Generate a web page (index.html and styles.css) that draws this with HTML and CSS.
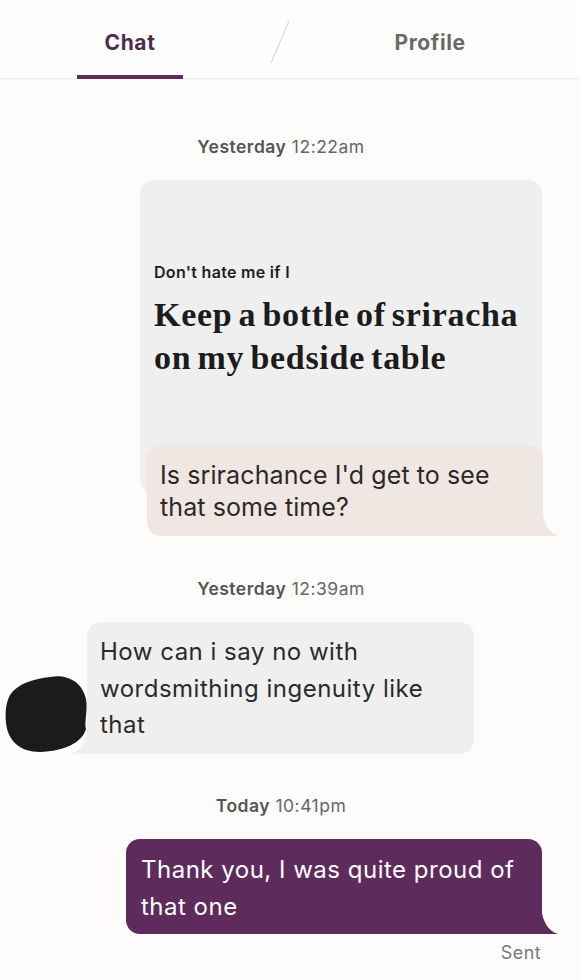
FILE: index.html
```html
<!DOCTYPE html>
<html>
<head>
<meta charset="utf-8">
<link rel="stylesheet" href="styles.css">
</head>
<body>
<header class="tabs">
  <div class="tab active">Chat</div>
  <div class="divider"><svg width="22" height="44" viewBox="0 0 22 44"><line x1="20" y1="1" x2="2" y2="43" stroke="#d9d9d9" stroke-width="1.2"/></svg></div>
  <div class="tab">Profile</div>
</header>
<main class="chat">
  <div class="stamp stamp-1"><b>Yesterday</b> 12:22am</div>
  <div class="prompt-group">
    <div class="prompt-card">
      <div class="prompt-q">Don't hate me if I</div>
      <div class="prompt-a">Keep a bottle of sriracha on my bedside table</div>
    </div>
    <div class="bubble reply">Is srirachance I'd get to see that some time?<svg class="tail tail-r" width="17" height="26" viewBox="0 0 17 26"><path d="M0 0 Q3 22 17 26 L0 26 Z" fill="#f1e7e2"/></svg></div>
  </div>
  <div class="stamp stamp-2"><b>Yesterday</b> 12:39am</div>
  <div class="incoming-row">
    <svg class="avatar" width="84" height="80" viewBox="0 0 84 80"><path d="M6 22 C14 10 30 6 46 4 C62 1 78 8 82 26 C84 38 80 50 82 56 C78 70 60 78 36 79 C16 79 4 68 2 50 C1 38 2 30 6 22 Z" fill="#1b1b1b"/></svg>
    <div class="bubble incoming">How can i say no with wordsmithing ingenuity like that<svg class="tail tail-l" width="18" height="26" viewBox="0 0 18 26"><path d="M18 0 Q15 22 0 26 L18 26 Z" fill="#efefef"/></svg></div>
  </div>
  <div class="stamp stamp-3"><b>Today</b> 10:41pm</div>
  <div class="bubble outgoing">Thank you, I was quite proud of that one<svg class="tail tail-r" width="17" height="26" viewBox="0 0 17 26"><path d="M0 0 Q3 22 17 26 L0 26 Z" fill="#5e2b5c"/></svg></div>
  <div class="sent">Sent</div>
</main>
</body>
</html>
```

FILE: styles.css
```css
* { box-sizing: border-box; }
html, body { margin: 0; padding: 0; }
body {
  background: #fdfcfb;
  font-family: Inter, "Noto Sans", sans-serif;
  color: #222;
  width: 580px;
  height: 980px;
  overflow: hidden;
}
.tabs {
  display: grid;
  grid-template-columns: 260px 40px 260px;
  height: 79px;
  border-bottom: 1px solid #ececec;
  box-shadow: 0 1px 2px rgba(0,0,0,0.04);
  background: #fefefe;
}
.tab {
  display: flex;
  align-items: center;
  justify-content: center;
  font-size: 21px;
  letter-spacing: 0.6px;
  font-weight: 700;
  color: #6a6a6a;
  position: relative;
  padding-top: 6px;
}
.tab.active { color: #4f2a4f; }
.tab.active::after {
  content: "";
  position: absolute;
  left: 77px;
  right: 77px;
  bottom: -1px;
  height: 4px;
  background: #5a2d5a;
}
.divider {
  display: flex;
  justify-content: center;
  padding-top: 20px;
}
.chat {
  display: flex;
  flex-direction: column;
}
.stamp {
  align-self: center;
  margin-right: 18px;
  font-size: 17.5px;
  line-height: 20px;
  color: #666;
  letter-spacing: 0.5px;
}
.stamp b { font-weight: 600; color: #555; }
.stamp-1 { margin-top: 58px; }
.stamp-2 { margin-top: 43px; }
.stamp-3 { margin-top: 42px; }
.prompt-group {
  margin-top: 23px;
  margin-left: 140px;
  width: 402px;
  display: flex;
  flex-direction: column;
}
.prompt-card {
  background: #efefef;
  border-radius: 14px;
  padding: 82px 14px 115px 14px;
}
.prompt-q {
  font-size: 16px;
  line-height: 20px;
  letter-spacing: 0.3px;
  font-weight: 600;
  color: #1e1e1e;
}
.prompt-a {
  margin-top: 11px;
  font-family: "Liberation Serif", "Times New Roman", serif;
  font-weight: 700;
  font-size: 34px;
  line-height: 43px;
  letter-spacing: 0.7px;
  word-spacing: -3px;
  color: #1c1c1c;
}
.bubble {
  position: relative;
  color: #2a2a2a;
}
.reply {
  margin-top: -49px;
  margin-left: 7px;
  width: 396px;
  background: #f1e7e2;
  border-radius: 14px 14px 0 14px;
  padding: 14px 13px 13px 13px;
  font-size: 25px;
  letter-spacing: 0.1px;
  line-height: 32px;
}
.tail { position: absolute; bottom: 0; }
.tail-r { right: -16px; }
.tail-l { left: -17px; }
.incoming-row {
  display: flex;
  align-items: flex-end;
  margin-top: 23px;
  padding-left: 4px;
}
.avatar {
  position: relative;
  z-index: 1;
  margin-bottom: 1px;
  margin-right: -1px;
}
.incoming {
  width: 387px;
  background: #efefef;
  border-radius: 14px 14px 14px 0;
  padding: 12px 13px 10px 13px;
  line-height: 36.5px;
  font-size: 24px;
  letter-spacing: 0.5px;
}
.outgoing {
  margin-top: 23px;
  margin-left: 126px;
  width: 416px;
  background: #5e2b5c;
  color: #fff;
  border-radius: 14px 14px 0 14px;
  padding: 12px 15px 9px 15px;
  line-height: 37px;
  font-size: 24px;
  letter-spacing: 0.5px;
}
.sent {
  align-self: flex-end;
  margin-right: 39px;
  margin-top: 9px;
  font-size: 18px;
  letter-spacing: 0.4px;
  line-height: 20px;
  color: #7a7a7a;
}
```
